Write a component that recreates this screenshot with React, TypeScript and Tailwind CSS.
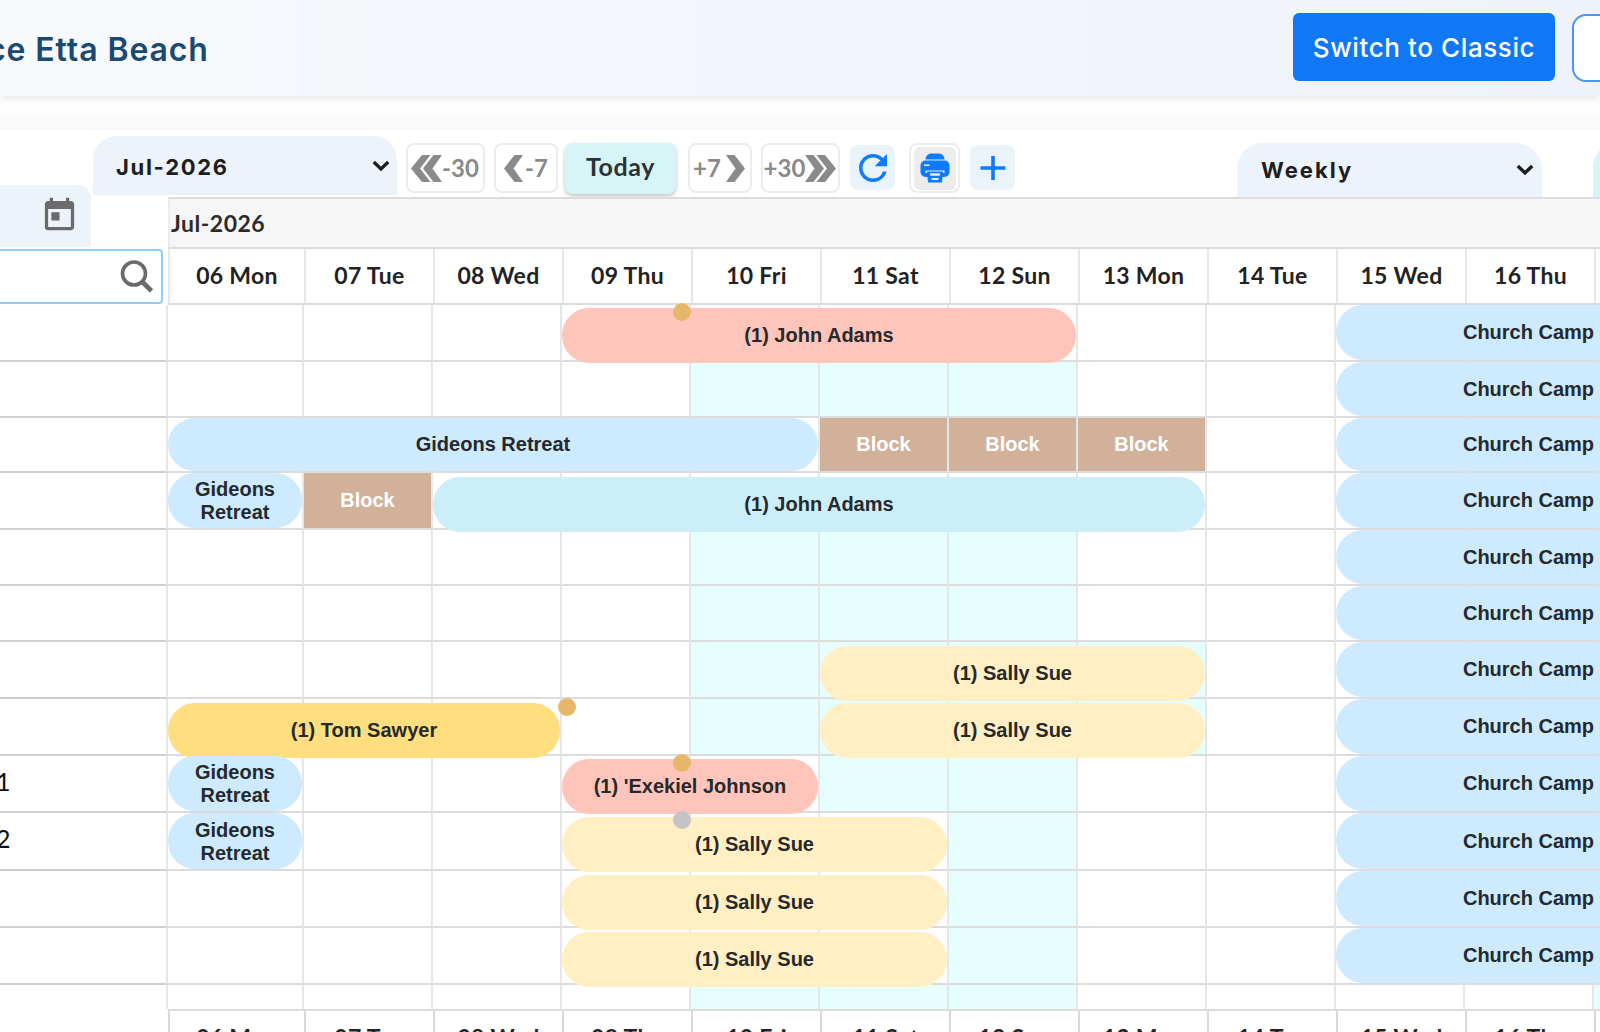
import React from 'react';
import { MdRefresh, MdToday } from 'react-icons/md';

type Tone = 'group' | 'block' | 'due' | 'arrived' | 'booked' | 'pending';

interface Booking {
  label: string;
  start: number;
  span: number;
  tone: Tone;
  dot?: string;
}

interface RoomRow {
  height: string;
  label?: string;
  weekend: number[];
  bookings: Booking[];
  last?: boolean;
}

// The last column only peeks in, so it has no label
const DAYS = [
  '06 Mon', '07 Tue', '08 Wed', '09 Thu', '10 Fri', '11 Sat',
  '12 Sun', '13 Mon', '14 Tue', '15 Wed', '16 Thu', '',
];

const TONES: Record<Tone, string> = {
  group: 'h-[calc(100%-2px)] rounded-[27px] bg-[#cdeafe] text-[#25292c]',
  block: 'h-[calc(100%-2px)] bg-[#d1b199] text-white',
  due: 'mt-[3px] h-[55px] rounded-[27px] bg-[#ffc5ba] text-[#25292c]',
  arrived: 'mt-[4px] h-[55px] rounded-[27px] bg-[#cbeef8] text-[#25292c]',
  booked: 'mt-[4px] h-[55px] rounded-[27px] bg-[#ffefc2] text-[#25292c]',
  pending: 'mt-[4px] h-[55px] rounded-[27px] bg-[#ffde7f] text-[#25292c]',
};

const COLUMNS: Record<number, string> = {
  0: 'col-start-2', 1: 'col-start-3', 2: 'col-start-4', 3: 'col-start-5', 4: 'col-start-6',
  5: 'col-start-7', 6: 'col-start-8', 7: 'col-start-9', 8: 'col-start-10', 9: 'col-start-11',
  10: 'col-start-12', 11: 'col-start-13',
};

const SPANS: Record<number, string> = {
  1: 'col-end-[span_1]', 2: 'col-end-[span_2]', 3: 'col-end-[span_3]',
  4: 'col-end-[span_4]', 5: 'col-end-[span_5]', 6: 'col-end-[span_6]',
};

const camp: Booking = { label: 'Church Camp', start: 9, span: 3, tone: 'group' };
const retreat: Booking = { label: 'Gideons Retreat', start: 0, span: 1, tone: 'group' };
const sallyLate: Booking = { label: '(1) Sally Sue', start: 5, span: 3, tone: 'booked' };
const sally: Booking = { label: '(1) Sally Sue', start: 3, span: 3, tone: 'booked' };

const GOLD = 'left-[111px] top-[-5px] bg-[#e6b66b]';

const ROWS: RoomRow[] = [
  { height: 'h-[57px]', weekend: [], bookings: [{ label: '(1) John Adams', start: 3, span: 4, tone: 'due', dot: GOLD }, camp] },
  { height: 'h-[56px]', weekend: [4, 5, 6], bookings: [camp] },
  {
    height: 'h-[55px]',
    weekend: [],
    bookings: [
      { label: 'Gideons Retreat', start: 0, span: 5, tone: 'group' },
      { label: 'Block', start: 5, span: 1, tone: 'block' },
      { label: 'Block', start: 6, span: 1, tone: 'block' },
      { label: 'Block', start: 7, span: 1, tone: 'block' },
      camp,
    ],
  },
  {
    height: 'h-[57px]',
    weekend: [],
    bookings: [
      retreat,
      { label: 'Block', start: 1, span: 1, tone: 'block' },
      { label: '(1) John Adams', start: 2, span: 6, tone: 'arrived' },
      camp,
    ],
  },
  { height: 'h-[56px]', weekend: [4, 5, 6], bookings: [camp] },
  { height: 'h-[56px]', weekend: [4, 5, 6], bookings: [camp] },
  { height: 'h-[57px]', weekend: [4, 5, 6, 7], bookings: [sallyLate, camp] },
  {
    height: 'h-[57px]',
    weekend: [4, 5, 6, 7],
    bookings: [
      { label: '(1) Tom Sawyer', start: 0, span: 3, tone: 'pending', dot: 'left-[390px] top-[-5px] bg-[#e6b66b]' },
      sallyLate,
      camp,
    ],
  },
  {
    height: 'h-[57px]',
    label: '1',
    weekend: [5, 6],
    bookings: [retreat, { label: "(1) 'Exekiel Johnson", start: 3, span: 2, tone: 'due', dot: GOLD }, camp],
  },
  {
    height: 'h-[58px]',
    label: '2',
    weekend: [6],
    bookings: [retreat, { ...sally, dot: 'left-[111px] top-[-6px] bg-[#c4c4c4]' }, camp],
  },
  { height: 'h-[57px]', weekend: [6], bookings: [sally, camp] },
  { height: 'h-[57px]', weekend: [6], bookings: [sally, camp] },
  { height: 'h-[24px]', weekend: [4, 5, 6, 11], bookings: [], last: true },
];

function ChevronDown() {
  return (
    <svg width="18" height="12" viewBox="0 0 18 12" fill="none" stroke="#1e1e1e" strokeWidth="3.4">
      <path d="M1.8 2 9 9 16.2 2" />
    </svg>
  );
}

function SkipIcon({ double = false, back = false }: { double?: boolean; back?: boolean }) {
  return (
    <svg
      width={double ? 32 : 19}
      height="27"
      viewBox={double ? '0 0 32 27' : '0 0 19 27'}
      fill="#8a8a8a"
      className={back ? 'shrink-0 -scale-x-100' : 'shrink-0'}
    >
      <path d="M0 0h8.500L19 13.500 8.500 27H0l9.500-13.500z" />
      {double && <path d="M11.500 0H20l11 13.500L20 27h-8.500L22 13.500z" />}
    </svg>
  );
}

function PrinterIcon() {
  return (
    <svg width="30" height="30" viewBox="0 0 30 30" fill="#0d7bff">
      <path d="M5.500 6.500C5.500 3 8 .5 11.500.5h7c3.500 0 6 2.500 6 6z" />
      <path d="M5.500 7.500h19a5 5 0 0 1 5 5V19a5 5 0 0 1-5 5h-19a5 5 0 0 1-5-5v-6.500a5 5 0 0 1 5-5z" />
      <path d="M4 12.200h5.500" stroke="#ececec" strokeWidth="1.600" />
      <path d="M5.500 17.500h19V20h-19z" fill="#ececec" />
      <path d="M7 18.500h16l-1 11H8z" />
      <path d="M10 20.200h10l-.3 2.600h-9.400zM11.500 25h7v2h-7z" fill="#ececec" />
    </svg>
  );
}

function PageHeader() {
  return (
    <header className="relative z-10 flex h-24 shrink-0 items-start justify-between bg-linear-to-r from-[#f8f9fd] to-[#eef2fa] shadow-[0_2px_8px_rgba(0,0,0,0.12)]">
      <h1 className="-ml-[13px] mt-[31px] whitespace-nowrap font-[Inter,sans-serif] text-[32px] leading-[38px] font-semibold tracking-[0.9px] text-[#1a4971]">
        ce Etta Beach
      </h1>
      <div className="-mr-[60px] flex items-start gap-[17px] pt-[13px]">
        <button className="h-[68px] w-[262px] rounded-md bg-[#1078f5] font-[Inter,sans-serif] text-[26px] font-medium tracking-[0.6px] whitespace-nowrap text-white">
          Switch to Classic
        </button>
        <button className="mt-[1px] h-[68px] w-[88px] rounded-[14px] border-2 border-[#4a96f8] bg-white" aria-label="More" />
      </div>
    </header>
  );
}

function Toolbar() {
  const step =
    'flex h-[50px] shrink-0 items-center justify-center rounded-lg border-2 border-[#ececec] bg-white font-[Lato,sans-serif] text-[24px] font-bold text-[#8a8a8a]';
  return (
    <div className="flex h-[67px] shrink-0 items-start pl-[93px]">
      <button className="mt-[6px] flex h-[59px] w-[304px] shrink-0 items-center justify-between rounded-t-[24px] bg-[#ecf3fa] pr-[7px] pl-[23px] font-[Inter,sans-serif] text-[22px] font-bold tracking-[1.700px] text-[#1e1e1e]">
        <span className="pt-[4px]">Jul-2026</span>
        <ChevronDown />
      </button>
      <div className="ml-[9px] flex shrink-0 items-start pt-[13px]">
        <button className={`${step} w-[79px] pr-[2px]`}>
          <SkipIcon double back />
          <span>-30</span>
        </button>
        <button className={`${step} ml-[9px] w-[64px] gap-[2px]`}>
          <SkipIcon back />
          <span>-7</span>
        </button>
        <button className="ml-[7px] h-[51px] w-[111px] rounded-lg bg-[#d7f5f6] pb-[3px] font-[Lato,sans-serif] text-[25px] font-bold tracking-[0.6px] text-[#2b3338] shadow-[0_2px_4px_rgba(0,0,0,0.25)]">
          Today
        </button>
        <button className={`${step} ml-[12px] w-[64px] gap-[5px] pr-[2px]`}>
          <span>+7</span>
          <SkipIcon />
        </button>
        <button className={`${step} ml-[9px] w-[79px]`}>
          <span>+30</span>
          <SkipIcon double />
        </button>
        <button className="mt-[2px] ml-[10px] flex h-[45px] w-[45px] items-center justify-center rounded-lg bg-[#eaf2fa]" aria-label="Refresh">
          <MdRefresh size={42} color="#0d7bff" />
        </button>
        <button className="ml-[14px] flex h-[50px] w-[51px] items-center justify-center rounded-lg border-2 border-[#ececec] bg-white" aria-label="Print">
          <span className="flex h-[43px] w-[42px] items-center justify-center rounded-md bg-[#ececec]">
            <PrinterIcon />
          </span>
        </button>
        <button className="mt-[2px] ml-[10px] flex h-[45px] w-[45px] items-center justify-center rounded-lg bg-[#eaf2fa]" aria-label="Add">
          <svg width="26" height="26" viewBox="0 0 26 26" stroke="#0d7bff" strokeWidth="3.6">
            <path d="M13 1v24M.5 13h25" />
          </svg>
        </button>
      </div>
      <button className="mt-[13px] ml-[222px] flex h-[54px] w-[305px] shrink-0 items-center justify-between rounded-t-[26px] bg-[#ecf3fa] pr-[8px] pl-[24px] font-[Inter,sans-serif] text-[22px] font-bold tracking-[2px] text-[#1e1e1e]">
        Weekly
        <ChevronDown />
      </button>
      <div className="mt-[13px] ml-[51px] h-[54px] w-[200px] shrink-0 rounded-t-[24px] bg-[#d7f5f6]" />
    </div>
  );
}

function DayCells({ border }: { border: string }) {
  return (
    <div className={`grid h-[58px] grid-cols-[136px_repeat(11,129px)] border-y-2 border-l-2 bg-white ${border}`}>
      {DAYS.map((day, idx) => (
        <div
          key={idx}
          className={`flex items-center justify-center border-r-2 pb-[2px] font-[Lato,sans-serif] text-[23px] font-bold tracking-[0.3px] text-[#222] ${border}`}
        >
          {day}
        </div>
      ))}
    </div>
  );
}

function Row({ row }: { row: RoomRow }) {
  const line = row.last ? 'border-b-0' : 'border-b-2';
  return (
    <div className={`grid w-max shrink-0 grid-cols-[168px_136px_repeat(11,129px)] grid-rows-[100%] ${row.height}`}>
      <div className={`col-start-1 row-start-1 border-r-2 border-r-[#e6e6e6] border-b-[#cfcfcf] pt-[9px] font-[Lato,sans-serif] text-[25px] leading-[32px] text-[#111] ${line}`}>
        {row.label && <span className="-ml-[4px]">{row.label}</span>}
      </div>
      {DAYS.map((_, idx) => (
        <div
          key={idx}
          className={`row-start-1 border-r-2 border-r-[#e6e6e6] border-b-[#dcdcdc] ${line} ${COLUMNS[idx]} ${
            row.weekend.includes(idx) ? 'bg-[#e6fefd]' : ''
          }`}
        />
      ))}
      {row.bookings.map((b, idx) => (
        <div
          key={idx}
          className={`relative z-10 mr-[2px] row-start-1 flex items-center justify-center text-center font-['Liberation_Sans',Arial,sans-serif] text-[20px] leading-[23px] font-bold ${COLUMNS[b.start]} ${SPANS[b.span]} ${TONES[b.tone]}`}
        >
          <span className={b === retreat ? 'w-[90px] pt-[1px]' : 'whitespace-nowrap'}>{b.label}</span>
          {b.dot && <i className={`absolute size-[18px] rounded-full ${b.dot}`} />}
        </div>
      ))}
    </div>
  );
}

export default function App() {
  return (
    <div className="flex h-[1032px] w-[1600px] flex-col overflow-hidden bg-white">
      <PageHeader />
      <div className="h-[34px] shrink-0 bg-linear-to-b from-white from-30% to-[#f8f8f8]" />
      <Toolbar />

      {/* Timeline header */}
      <div className="flex h-[108px] shrink-0 items-start">
        <div className="-mt-[12px] flex w-[168px] shrink-0 flex-col">
          <div className="flex h-[62px] w-[91px] items-start justify-end rounded-tr-[14px] bg-[#ecf3fa] pt-[11px] pr-[12px]">
            <MdToday size={39} color="#6b6b6b" />
          </div>
          <div className="mt-[2px] flex h-[55px] w-[163px] items-center justify-end rounded-r-[4px] border-2 border-l-0 border-[#8fcbfb] bg-white pr-[7px]">
            <svg width="34" height="34" viewBox="0 0 34 34" fill="none" stroke="#6b6b6b">
              <circle cx="14" cy="13.500" r="11.500" strokeWidth="3.600" />
              <path d="m22 21.500 9.500 9.500" strokeWidth="4.600" />
            </svg>
          </div>
        </div>
        <div className="w-max shrink-0">
          <div className="flex h-[50px] items-center border-t-2 border-l-2 border-t-[#dcdcdc] border-l-[#ececec] bg-[#f6f6f6] pl-[1px] font-[Lato,sans-serif] text-[23px] font-bold tracking-[0.5px] text-[#2b2b2b]">
            Jul-2026
          </div>
          <DayCells border="border-x-[#e8e8e8] border-y-[#dcdcdc]" />
        </div>
      </div>

      {ROWS.map((row, idx) => (
        <Row key={idx} row={row} />
      ))}

      <div className="flex shrink-0">
        <div className="w-[168px] shrink-0" />
        <DayCells border="border-x-[#d9d9d9] border-y-[#dcdcdc]" />
      </div>
    </div>
  );
}
